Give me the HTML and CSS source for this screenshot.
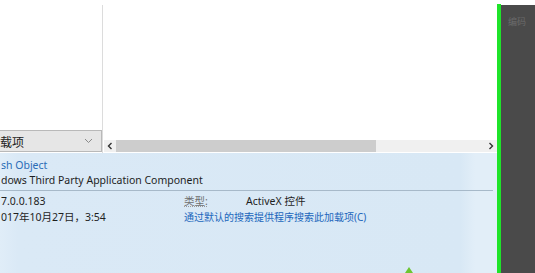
FILE: index.html
```html
<!DOCTYPE html>
<html lang="zh-CN">
<head>
<meta charset="utf-8">
<title>加载项</title>
<link rel="stylesheet" href="styles.css">
</head>
<body>
<div class="main">
  <div class="top">
    <div class="left">
      <div class="dropdown">
        <span class="dd-text">载项</span>
        <svg class="chev" width="9" height="6" viewBox="0 0 9 6"><path d="M1 1l3.5 3.5L8 1" fill="none" stroke="#8a8a8a" stroke-width="1"/></svg>
      </div>
    </div>
    <div class="divider"></div>
    <div class="right">
      <div class="hscroll">
        <div class="arrow"><svg width="6" height="8" viewBox="0 0 6 8"><path d="M4.5 1L1.5 4l3 3" fill="none" stroke="#333" stroke-width="1.4"/></svg></div>
        <div class="thumb"></div>
        <div class="track"></div>
        <div class="arrow"><svg width="6" height="8" viewBox="0 0 6 8"><path d="M1.5 1l3 3-3 3" fill="none" stroke="#333" stroke-width="1.4"/></svg></div>
      </div>
    </div>
  </div>
  <div class="info">
    <div class="line name">sh Object</div>
    <div class="line">dows Third Party Application Component</div>
    <div class="sep"></div>
    <div class="grid">
      <div class="cell">7.0.0.183</div>
      <div class="cell label">类型:</div>
      <div class="cell">ActiveX 控件</div>
      <div class="cell">017年10月27日，3:54</div>
      <div class="cell link span2">通过默认的搜索提供程序搜索此加载项(C)</div>
    </div>
    <svg class="cursor" width="8" height="6" viewBox="0 0 8 6"><path d="M4 0L8 6H0z" fill="#6cc531"/></svg>
  </div>
</div>
<div class="green"></div>
<div class="dark"><span class="dark-text">编码</span></div>
</body>
</html>
```
FILE: styles.css
```css
html, body {
  margin: 0;
  padding: 0;
}
body {
  width: 535px;
  height: 273px;
  overflow: hidden;
  background: #ffffff;
  display: flex;
  font-family: "Noto Sans", "Noto Sans CJK SC", sans-serif;
  font-size: 10.5px;
  color: #1e1e1e;
}
.main {
  width: 497px;
  display: flex;
  flex-direction: column;
}
.top {
  height: 153px;
  display: flex;
  padding-top: 5px;
  box-sizing: border-box;
}
.left {
  width: 102px;
  display: flex;
  flex-direction: column;
  justify-content: flex-end;
  padding-bottom: 1px;
}
.dropdown {
  height: 22px;
  box-sizing: border-box;
  background: #e6e6e6;
  border: 1px solid #b9b9b9;
  border-left: none;
  display: flex;
  align-items: center;
  justify-content: space-between;
  padding: 0 8px 0 0;
}
.dd-text {
  font-family: "Noto Sans CJK SC", sans-serif;
  font-size: 12px;
  color: #222;
}
.divider {
  width: 1px;
  background: #dcdcdc;
}
.right {
  flex: 1;
  display: flex;
  flex-direction: column;
  justify-content: flex-end;
  padding-left: 1px;
}
.hscroll {
  height: 12px;
  display: flex;
  align-items: stretch;
  background: #f0f0f0;
  margin-bottom: 1px;
}
.arrow {
  width: 12px;
  display: flex;
  align-items: center;
  justify-content: center;
}
.thumb {
  width: 260px;
  background: #cdcdcd;
}
.track {
  flex: 1;
}
.info {
  flex: 1;
  position: relative;
  background: linear-gradient(90deg, #e0edf8 0px, #dae9f6 18px, #d8e8f5 460px, #e2eef8 475px, #e2eef8 497px);
  padding-top: 5px;
  box-sizing: border-box;
}
.line {
  line-height: 15px;
  padding-left: 1px;
  white-space: nowrap;
}
.name {
  color: #2a6cb6;
}
.sep {
  height: 1px;
  background: #a7b9c9;
  margin: 2px 4px 2px 0;
}
.grid {
  display: grid;
  grid-template-columns: 183px 62px auto;
  line-height: 16px;
  padding-left: 1px;
}
.cell {
  white-space: nowrap;
}
.label {
  color: #6e6e6e;
  text-decoration: underline dotted #9a9a9a;
}
.link {
  color: #2166bc;
  font-size: 10px;
}
.span2 {
  grid-column: 2 / span 2;
}
.cursor {
  position: absolute;
  left: 405px;
  bottom: 0;
}
.green {
  width: 4px;
  margin-top: 4px;
  background: #1fe42a;
}
.dark {
  flex: 1;
  margin-top: 5px;
  background: #4a4a4a;
  padding: 9px 0 0 7px;
}
.dark-text {
  font-family: "Noto Sans CJK SC", sans-serif;
  font-size: 9px;
  color: #6a6a6a;
}
```
